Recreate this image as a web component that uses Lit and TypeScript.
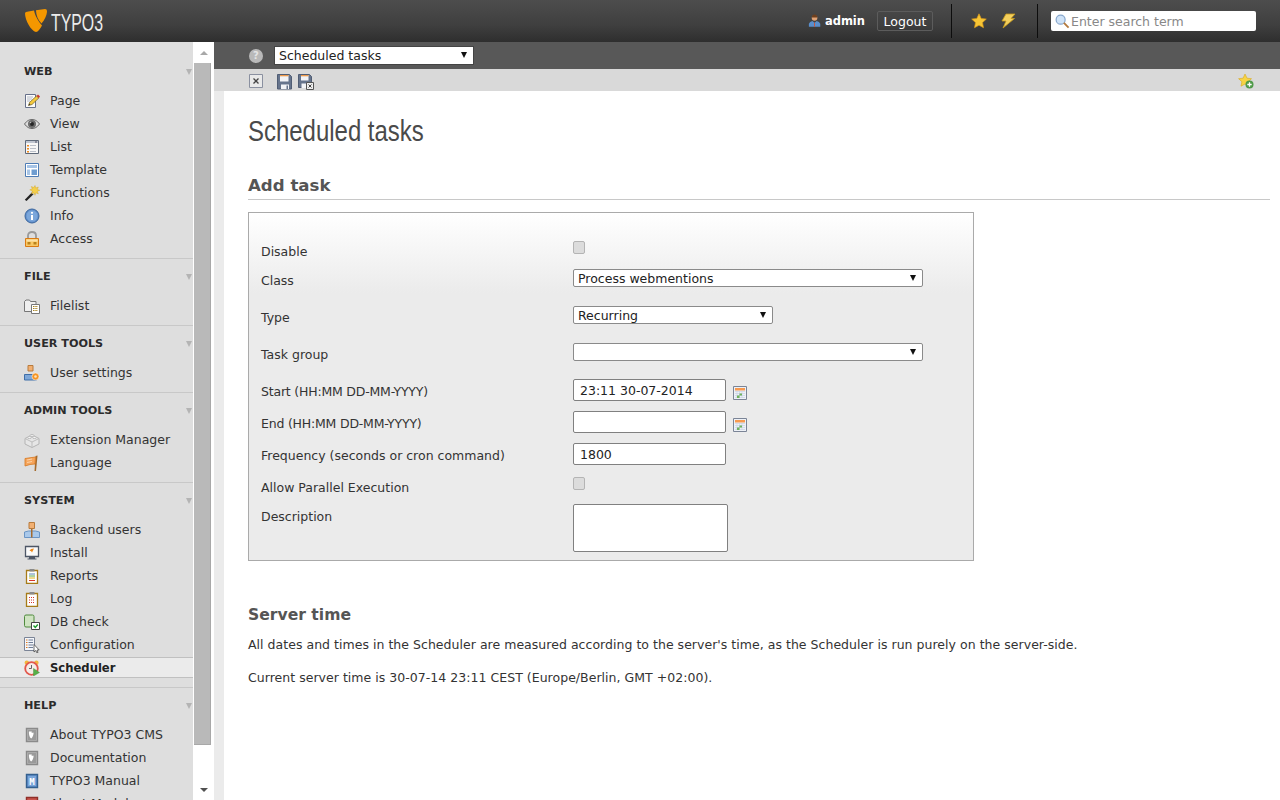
import { LitElement, html, css, svg } from 'lit';
import { customElement } from 'lit/decorators.js';

const icon = (body: unknown, size = 16) =>
  html`<svg width=${size} height=${size} viewBox="0 0 16 16">${body}</svg>`;

const T3 = svg`<path d="M5 4.500h2.800l-.3 1.200c1 .2 1.600.1 2-.2.4 1.700-1 5.200-2.300 6C5.800 10.800 4.600 7 5 4.500z" fill="#fff"/>`;

const ICONS: Record<string, unknown> = {
  page: svg`<path d="M1.500 1.500h10v13h-10z" fill="#fbfbfb" stroke="#66708a"/><path d="M3 4h6M3 6h5M3 8h3" stroke="#b4bac6"/><path d="M4.500 12.500l1.200-3.200L12.500 3l2.300 2-6.800 6.500z" fill="#f6cb3e" stroke="#6f5f22" stroke-width=".7"/><path d="M12.500 3l2.300 2 1.200-1.500L14 1.500z" fill="#c8392b"/><path d="M4.500 12.500l.7-2 1.300 1z" fill="#333"/>`,
  view: svg`<path d="M.5 8C3 4.500 5.500 3.500 8 3.500S13 4.500 15.500 8C13 11.500 10.500 12.500 8 12.500S3 11.500 .5 8z" fill="#dcdcdc" stroke="#666"/><circle cx="8" cy="8" r="4" fill="#6a6a6a"/><circle cx="8" cy="8" r="2" fill="#262626"/><circle cx="6.500" cy="6.500" r=".8" fill="#bbb"/>`,
  list: svg`<path d="M1.500 1.500h13v13h-13z" fill="#f7f7f7" stroke="#5f6a7a"/><path d="M2 2h12v2H2z" fill="#bfc5d0"/><path d="M11 2.500h2v1h-2z" fill="#556"/><path d="M3 6h2v1.500H3zM3 9h2v1.500H3zM3 12h2v1.500H3z" fill="#f08a1c"/><path d="M6.500 6.500h6M6.500 9.500h6M6.500 12.500h6" stroke="#7f889a" stroke-dasharray="1 1"/>`,
  template: svg`<path d="M1.500 1.500h13v13h-13z" fill="#fff" stroke="#4f7db5"/><path d="M3 3h10v3H3z" fill="#a6c4e6"/><path d="M3 7.500h3V13H3z" fill="#a9c6e6"/><path d="M7.500 7.500H13V13H7.500z" fill="#6f9dd0"/>`,
  wand: svg`<path d="M.8 14.800L8.800 6.500l1.700 1.700L2.500 16z" fill="#222"/><path d="M8.800 6.500l1.700 1.700-1.200 1.200-1.700-1.700z" fill="#ddd"/><path d="M11 .5l.8 2.500 2.500-1-1 2.500 2.500.8-2.500 1 1 2.500-2.500-1-.8 2.500-1-2.500-2.500 1 1-2.500L5.800 4.800l2.500-.8-1-2.500 2.500 1z" fill="#f4cf4a" stroke="#d09f1c" stroke-width=".4"/>`,
  info: svg`<circle cx="8" cy="8" r="7" fill="#5f8fcb" stroke="#3c669d"/><circle cx="8" cy="8" r="5.500" fill="#7ba6da"/><path d="M7 7h2v5H7z" fill="#fff"/><circle cx="8" cy="4.800" r="1.100" fill="#fff"/>`,
  lock: svg`<path d="M4 7.500V4.500C4 2.500 5.500 1 8 1s4 1.500 4 3.500V7.500" fill="none" stroke="#9a9a9a" stroke-width="1.800"/><path d="M1.500 7.500h13v8h-13z" fill="#f9c865" stroke="#d97a14"/><path d="M2.500 8.500h11v2h-11z" fill="#fde2a6"/><path d="M3.500 11h3v2.500h-3zM9.500 11h3v2.500h-3z" fill="#b9821c"/>`,
  folder: svg`<path d="M.5 13.500v-10l1.500-1.500h3.500l1 1.500h5.500v10z" fill="#efefef" stroke="#777"/><path d="M7.500 6.500h8v9h-8z" fill="#fff" stroke="#777"/><path d="M9 8.500h5M9 10.500h5M9 12.500h5" stroke="#a98524" stroke-dasharray="1.500 .8"/>`,
  usercfg: svg`<path d="M4 .5h5v5.500H4z" fill="#f2b072" stroke="#b87b3c"/><path d="M.5 15V9.500h12V15z" fill="#7ea7d8" stroke="#3f6ea8"/><circle cx="11.500" cy="11.500" r="3.500" fill="#f59322" stroke="#fff" stroke-width=".5"/><circle cx="11.500" cy="11.500" r="1.300" fill="#ffe2b8"/>`,
  brick: svg`<path d="M8 3l7 3.500V12l-7 3.500L1 12V6.500z" fill="#e6e6e6" stroke="#b4b4b4"/><path d="M1 6.500L8 10l7-3.500M8 10v5.500" stroke="#bdbdbd" fill="none"/><ellipse cx="5.500" cy="5.500" rx="2" ry="1" fill="#f4f4f4" stroke="#bbb"/><ellipse cx="10.500" cy="5.500" rx="2" ry="1" fill="#f4f4f4" stroke="#bbb"/><ellipse cx="8" cy="3.500" rx="2" ry="1" fill="#f4f4f4" stroke="#bbb"/>`,
  flag: svg`<path d="M11.500 1l2-.5 0 .5-1.500 15h-1.500z" fill="#a56a2c"/><path d="M1 3.500l10.500-1.500-.5 7-5 .5-5 1.500z" fill="#f6a55c" stroke="#d5771f" stroke-width=".8"/><path d="M3 5l5-1M3 7.500l5-1" stroke="#fbd3a8"/>`,
  user: svg`<path d="M5 .5h5.500v6H5z" fill="#f2b072" stroke="#b87b3c"/><path d="M.5 15.500V10l4-1h7l4 1v5.500z" fill="#a9c8ea" stroke="#6a94c4"/><path d="M7 7h1.500v8.500H7z" fill="#a56a2c"/>`,
  monitor: svg`<path d="M1.500 1.500h13v10h-13z" fill="#fafafa" stroke="#4d5666" stroke-width="1.300"/><path d="M5 12h6v1.500H5zM3.500 13.500h9v1h-9z" fill="#4d5666"/><path d="M7 4l3-.5-2 4-1-1.500H5.500z" fill="#f08a1c"/>`,
  report: svg`<path d="M2.500 2.500h11v13h-11z" fill="#fff" stroke="#a77b18" stroke-width="1.300"/><path d="M5.500 1h5v2.500h-5z" fill="#8a8a8a"/><path d="M5 6h6" stroke="#5c86b8"/><path d="M5 8h6" stroke="#5aa84a"/><path d="M5 10h6" stroke="#e2b21c"/><path d="M5 12.500h6" stroke="#d7362a"/>`,
  log: svg`<path d="M2.500 2.500h11v13h-11z" fill="#fff" stroke="#a77b18" stroke-width="1.300"/><path d="M5.500 1h5v2.500h-5z" fill="#8a8a8a"/><path d="M5 6.500h6M5 9h6M5 11.500h6" stroke="#d7362a" stroke-dasharray="1 1"/>`,
  dbcheck: svg`<path d="M.5 2.500Q.5 1 2 1h6.500Q10 1 10 2.500v10.500H2Q.5 13 .5 11.500z" fill="#cfe3c2" stroke="#4f8a3d"/><path d="M7.500 8.500h8v7h-8z" fill="#fff" stroke="#444"/><path d="M9.500 11.500l1.800 2 2.500-3" fill="none" stroke="#1d9a2a" stroke-width="1.400"/>`,
  config: svg`<path d="M.5 .5h10v13H.5z" fill="#f4f6fa" stroke="#7b8496"/><path d="M2 3h1.500M2 5.500h1.500M2 8h1.500M2 10.500h1.500" stroke="#e07a1c"/><path d="M4.500 3H9M4.500 5.500H9M4.500 8H9M4.500 10.500H9" stroke="#6f7d96"/><path d="M10 7.500v7.500l1.800-1.500 1.200 2.500 1-.5-1-2.500h2.200z" fill="#fff" stroke="#333" stroke-width=".7"/>`,
  clock: svg`<circle cx="2.800" cy="2.800" r="2.200" fill="#f3b53c"/><circle cx="12.400" cy="2.800" r="2.200" fill="#f3b53c"/><circle cx="7.500" cy="8.500" r="6.300" fill="#f5ece8" stroke="#e2574c" stroke-width="1.800"/><path d="M7.500 5v3.500H5" fill="none" stroke="#666"/><path d="M9.500 8.500l6 4-6 3.500z" fill="#56b048" stroke="#3c8c32" stroke-width=".4"/>`,
  t3doc: svg`<path d="M2.500 1.500h11v13h-11z" fill="#b5b5b5" stroke="#8a8a8a" stroke-width="1.400"/><path d="M4 3h8v10H4z" fill="#9a9a9a"/>${T3}`,
  manual: svg`<path d="M2.500 1.500h11v13h-11z" fill="#5f8fcb" stroke="#34608f" stroke-width="1.400"/><path d="M4 3h8v10H4z" fill="#7ba6da"/><text x="8" y="11.500" font-size="9" font-family="DejaVu Sans Mono" font-weight="bold" text-anchor="middle" fill="#fff">M</text>`,
  modules: svg`<path d="M2.500 1.500h11v13h-11z" fill="#c9544c" stroke="#8f2f28" stroke-width="1.400"/><path d="M4 4h8v2H4z" fill="#f4c6c2"/>`,
  close: svg`<path d="M.5 .5h13v13H.5z" fill="#e9e9e9" stroke="#8a90a0"/><path d="M4.500 4.500l5 5M9.500 4.500l-5 5" stroke="#444" stroke-width="1.300"/>`,
  save: svg`<path d="M.5 .5h12l2 2v12.500H.5z" fill="#66748c" stroke="#505d74"/><path d="M3 1h8.500v6.500H3z" fill="#f2f3f6"/><path d="M3 1h8.500v1.300H3z" fill="#ee9a4a"/><path d="M4 10.500h8V15H4z" fill="#f2f3f6"/><path d="M9.500 11.500H11V15H9.500z" fill="#66748c"/>`,
  saveclose: svg`<path d="M.5 .5h11l2 2v11H.5z" fill="#66748c" stroke="#505d74"/><path d="M3 1h7.500v5.500H3z" fill="#f2f3f6"/><path d="M3 1h7.500v1.300H3z" fill="#ee9a4a"/><path d="M3.500 9.500h4.500V14H3.500z" fill="#f2f3f6"/><path d="M8.500 8.500h7v7h-7z" fill="#eee" stroke="#555"/><path d="M10.500 10.500l3 3M13.500 10.500l-3 3" stroke="#444"/>`,
  star: svg`<path d="M8 .8l2.200 4.700 5.100.6-3.800 3.500 1 5.100L8 12.200 3.500 14.700l1-5.100L.7 6.100l5.100-.6z" fill="#f7c535" stroke="#d99a1a" stroke-width=".7"/>`,
  bolt: svg`<path d="M6 1h9l-4 4.500h3.500L3 15l3-7H2z" fill="#f3cf5d" stroke="#c79a1c" stroke-width=".8"/>`,
  starplus: svg`<path d="M7 1l2 4.200 4.500.5-3.300 3 .9 4.500L7 11 3 13.200l.9-4.500L.6 5.700l4.500-.5z" fill="#f7d444" stroke="#d9a71a" stroke-width=".6"/><circle cx="11.500" cy="11.500" r="4" fill="#4f9a48"/><path d="M9.300 11.500h4.400M11.500 9.300v4.400" stroke="#fff" stroke-width="1.300"/>`,
  admin: svg`<circle cx="7.500" cy="4.500" r="3.200" fill="#e0a276"/><path d="M4.300 4c0-2 1.400-3.300 3.200-3.300S10.700 2 10.700 4z" fill="#6d3f1d"/><path d="M1 14.500V11q1-2.500 4-3l2.500 2 2.500-2q3 .5 4 3v3.500z" fill="#5a8fcd"/><path d="M7 10h1v4.500H7z" fill="#d8512c"/>`,
  search: svg`<circle cx="6" cy="6" r="4.800" fill="#cfe3f8" stroke="#86a6cc" stroke-width="1.300"/><path d="M9.500 9.500l5 5" stroke="#b4793c" stroke-width="2"/>`,
  calendar: svg`<path d="M.5 .5h13v13H.5z" fill="#eef1f6" stroke="#7b8496"/><path d="M2 2h10v2.500H2z" fill="#f79a50"/><path d="M2 5.500h10M2 7.500h10M2 9.500h10M2 11.500h10M4 5v7M6.500 5v7M9 5v7" stroke="#c8d3e6" stroke-width=".7"/><path d="M6.500 7.500H9V9.500H6.500zM4 9.500h2.500v2.500H4z" fill="#6fb25c"/>`,
};

const NAV = [
  { title: 'WEB', items: [['Page', 'page'], ['View', 'view'], ['List', 'list'], ['Template', 'template'], ['Functions', 'wand'], ['Info', 'info'], ['Access', 'lock']] },
  { title: 'FILE', items: [['Filelist', 'folder']] },
  { title: 'USER TOOLS', items: [['User settings', 'usercfg']] },
  { title: 'ADMIN TOOLS', items: [['Extension Manager', 'brick'], ['Language', 'flag']] },
  { title: 'SYSTEM', items: [['Backend users', 'user'], ['Install', 'monitor'], ['Reports', 'report'], ['Log', 'log'], ['DB check', 'dbcheck'], ['Configuration', 'config'], ['Scheduler', 'clock']] },
  { title: 'HELP', items: [['About TYPO3 CMS', 't3doc'], ['Documentation', 't3doc'], ['TYPO3 Manual', 'manual'], ['About Modules', 'modules']] },
];

@customElement('app-root')
export class AppRoot extends LitElement {
  static styles = css`
    :host {
      display: flex;
      flex-direction: column;
      width: 1280px;
      height: 800px;
      overflow: hidden;
      background: #fff;
      font-family: 'DejaVu Sans', Verdana, sans-serif;
      font-size: 12.5px;
      color: #333;
    }
    svg { display: block; flex: none; }

    .topbar {
      height: 42px;
      flex: none;
      display: flex;
      align-items: center;
      background: linear-gradient(#4d4d4d, #3f3f3f 60%, #2e2e2e);
      color: #fff;
    }
    .logo { display: flex; align-items: center; margin-left: 25px; gap: 4px; margin-top: -2px; }
    .logo-text {
      display: inline-block;
      font-family: 'Liberation Sans', sans-serif;
      font-size: 23px;
      color: #ececec;
      line-height: 24px;
      margin-top: 5px;
      transform: scaleX(.69);
      transform-origin: left center;
    }
    .top-right { margin-left: auto; display: flex; align-items: center; height: 100%; }
    .who { display: flex; align-items: center; gap: 3px; font-weight: bold; font-size: 11.5px; }
    .logout {
      margin-left: 12px;
      width: 56px;
      height: 20px;
      box-sizing: border-box;
      border: 1px solid #5c5c5c;
      border-radius: 2px;
      background: none;
      color: #fff;
      font: inherit;
      padding: 0;
    }
    .sep { width: 1px; height: 34px; background: #0d0d0d; margin-left: 18px; }
    .shortcuts { display: flex; gap: 13px; margin-left: 19px; }
    .shortcuts + .sep { margin-left: 21px; }
    .search {
      margin: 0 24px 0 13px;
      width: 205px;
      height: 20px;
      box-sizing: border-box;
      padding-left: 4px;
      display: flex;
      align-items: center;
      gap: 1px;
      background: #fff;
      border-radius: 2px;
      color: #888;
    }

    .body { flex: 1; display: flex; min-height: 0; }
    .sidebar { width: 193px; flex: none; background: #dedede; overflow: hidden; padding-top: 12px; box-sizing: border-box; }
    .section { padding-bottom: 8px; border-bottom: 1px solid #c8c8c8; }
    .section-head {
      height: 35px;
      padding: 0 1px 0 24px;
      display: flex;
      justify-content: space-between;
      font-weight: bold;
      font-size: 11.2px;
      line-height: 35px;
      color: #2b2b2b;
    }
    .caret {
      margin-top: 15px;
      width: 0;
      height: 0;
      border: 3.500px solid transparent;
      border-top: 6px solid #b4b4b4;
      border-bottom: 0;
    }
    .item { height: 23px; display: flex; align-items: center; gap: 10px; padding-left: 24px; }
    .item.active {
      height: 19px;
      margin: 1px 0;
      background: #ebebeb;
      border-top: 1px solid #c0c0c0;
      border-bottom: 1px solid #c0c0c0;
      font-weight: bold;
      font-size: 11.6px;
      color: #222;
    }

    .scroll { width: 21px; flex: none; background: #fff; display: flex; flex-direction: column; align-items: center; }
    .scroll-btn { height: 21px; flex: none; display: flex; align-items: center; justify-content: center; width: 100%; }
    .up { width: 0; height: 0; border: 4px solid transparent; border-bottom: 4px solid #a8a8a8; border-top: 0; }
    .down { width: 0; height: 0; border: 4px solid transparent; border-top: 4px solid #505050; border-bottom: 0; }
    .thumb { width: 17px; height: 682px; background: #b9b9b9; border-right: 1px solid #a8a8a8; border-bottom: 1px solid #a8a8a8; box-sizing: border-box; margin-right: 2px; }
    .track-rest { flex: 1; }

    .main { flex: 1; min-width: 0; display: flex; flex-direction: column; }
    .doc-dark { height: 27px; flex: none; background: #585858; display: flex; align-items: center; padding-left: 35px; gap: 11px; }
    .help {
      width: 14px;
      height: 14px;
      border-radius: 50%;
      background: #b9b9b9;
      color: #e4e4e4;
      font-size: 10px;
      font-weight: bold;
      text-align: center;
      line-height: 14px;
    }
    .doc-light { height: 22px; flex: none; box-sizing: border-box; padding: 4px 26px 0 35px; background: #d9d9d9; display: flex; align-items: center; }
    .doc-light .close { margin-right: 12px; }
    .doc-light .save { margin-right: 5px; }
    .doc-light .fav { margin-left: auto; margin-top: -2px; }

    .content-wrap { flex: 1; display: flex; min-height: 0; background: #ebebeb; padding-left: 10px; }
    .content { flex: 1; background: #fff; padding: 0 10px 0 24px; min-width: 0; }
    h1 {
      margin: 23px 0 0;
      font-family: 'Liberation Sans', sans-serif;
      font-weight: normal;
      font-size: 29px;
      line-height: 34px;
      color: #4a4a4a;
      transform: scaleX(.826);
      transform-origin: left center;
    }
    h2 {
      margin: 26px 0 12px;
      padding-bottom: 1px;
      border-bottom: 1px solid #c8c8c8;
      font-size: 16.6px;
      line-height: 24px;
      font-weight: bold;
      color: #555;
    }
    h3 {
      margin: 42px 0 0;
      font-size: 15.6px;
      line-height: 24px;
      font-weight: bold;
      color: #555;
    }
    p { margin: 0; line-height: 17px; letter-spacing: .03px; }
    .p1 { margin-top: 9px; }
    .p2 { margin-top: 16px; }

    .form {
      width: 726px;
      box-sizing: border-box;
      height: 349px;
      border: 1px solid #aaa;
      padding: 28px 0 0 12px;
      background: linear-gradient(#fff, #ebebeb 80px);
    }
    .row { display: grid; grid-template-columns: 312px 1fr; align-items: start; }
    .row label { display: block; line-height: 16px; }
    .row label.dt { letter-spacing: -.2px; }
    .h28 { height: 28px; }
    .h27 { height: 27px; }
    .h37 { height: 37px; }
    .h36 { height: 36px; }
    .h34 { height: 34px; }
    .h32 { height: 32px; }
    .lt3 label { margin-top: 3px; }
    .lt4 label { margin-top: 4px; }
    .lt5 label { margin-top: 5px; }
    .cb {
      appearance: none;
      display: block;
      margin: 0;
      width: 12px;
      height: 13px;
      box-sizing: border-box;
      border: 1px solid #b4b4b4;
      border-radius: 2px;
      background: #dcdcdc;
    }
    .sel { position: relative; display: block; }
    .sel select {
      appearance: none;
      display: block;
      width: 100%;
      box-sizing: border-box;
      height: 18px;
      padding: 0 0 0 4px;
      border: 1px solid #8a8a8a;
      border-radius: 2px;
      background: #fff;
      font: inherit;
      color: #222;
    }
    .sel::after {
      content: '';
      position: absolute;
      right: 7px;
      top: 6px;
      border: 3.500px solid transparent;
      border-top: 6px solid #111;
      border-bottom: 0;
    }
    .w350 { width: 350px; }
    .w200 { width: 200px; }
    .sel.module { width: 200px; }
    .sel.module select { height: 19px; border-radius: 0; border-color: #444; }
    .date { display: flex; gap: 7px; }
    .txt {
      display: block;
      width: 153px;
      height: 22px;
      box-sizing: border-box;
      margin: 0;
      padding: 0 6px;
      border: 1px solid #808080;
      border-radius: 2px;
      background: #fff;
      font: inherit;
      color: #222;
    }
    .date svg { margin-top: 7px; }
    textarea.txt { width: 155px; height: 48px; resize: none; }
  `;

  private renderNav() {
    return NAV.map((s) => html`
      <div class="section">
        <div class="section-head"><span>${s.title}</span><span class="caret"></span></div>
        ${s.items.map(([label, ic]) => html`
          <div class="item ${label === 'Scheduler' ? 'active' : ''}">${icon(ICONS[ic])}<span>${label}</span></div>
        `)}
      </div>
    `);
  }

  render() {
    return html`
      <header class="topbar">
        <div class="logo">
          <svg width="22" height="23" viewBox="0 0 22 23">
            <path d="M0 4.500Q0 3 2 2.700L9 1.500C10 7 14 13 17 16.500C15 20 13 23 11 23C6 22 0 11 0 4.500z" fill="#f49700"/>
            <path d="M11 1.200L20 0Q22 0 22 2C22 6 19.500 11 16.500 14.500C13 11 11 6 11 1.200z" fill="#f49700"/>
          </svg>
          <span class="logo-text">TYPO3</span>
        </div>
        <div class="top-right">
          <div class="who">${icon(ICONS.admin, 14)}<span>admin</span></div>
          <button class="logout">Logout</button>
          <div class="sep"></div>
          <div class="shortcuts">${icon(ICONS.star)}${icon(ICONS.bolt)}</div>
          <div class="sep"></div>
          <div class="search">${icon(ICONS.search, 15)}<span>Enter search term</span></div>
        </div>
      </header>
      <div class="body">
        <nav class="sidebar">${this.renderNav()}</nav>
        <div class="scroll">
          <div class="scroll-btn"><span class="up"></span></div>
          <div class="thumb"></div>
          <div class="track-rest"></div>
          <div class="scroll-btn"><span class="down"></span></div>
        </div>
        <div class="main">
          <div class="doc-dark">
            <div class="help">?</div>
            <span class="sel module"><select><option>Scheduled tasks</option></select></span>
          </div>
          <div class="doc-light">
            <span class="close">${icon(ICONS.close)}</span>
            <span class="save">${icon(ICONS.save)}</span>
            <span>${icon(ICONS.saveclose)}</span>
            <span class="fav">${icon(ICONS.starplus)}</span>
          </div>
          <div class="content-wrap">
            <div class="content">
              <h1>Scheduled tasks</h1>
              <h2>Add task</h2>
              <div class="form">
                <div class="row h28 lt3"><label>Disable</label><input class="cb" type="checkbox" /></div>
                <div class="row h37 lt4"><label>Class</label><span class="sel w350"><select><option>Process webmentions</option></select></span></div>
                <div class="row h37 lt4"><label>Type</label><span class="sel w200"><select><option>Recurring</option></select></span></div>
                <div class="row h36 lt4"><label>Task group</label><span class="sel w350"><select><option></option></select></span></div>
                <div class="row h32 lt5"><label class="dt">Start (HH:MM DD-MM-YYYY)</label><div class="date"><input class="txt" value="23:11 30-07-2014" />${icon(ICONS.calendar)}</div></div>
                <div class="row h32 lt5"><label class="dt">End (HH:MM DD-MM-YYYY)</label><div class="date"><input class="txt" />${icon(ICONS.calendar)}</div></div>
                <div class="row h34 lt5"><label>Frequency (seconds or cron command)</label><input class="txt" value="1800" /></div>
                <div class="row h27 lt3"><label>Allow Parallel Execution</label><input class="cb" type="checkbox" /></div>
                <div class="row lt5"><label>Description</label><textarea class="txt"></textarea></div>
              </div>
              <h3>Server time</h3>
              <p class="p1">All dates and times in the Scheduler are measured according to the server's time, as the Scheduler is run purely on the server-side.</p>
              <p class="p2">Current server time is 30-07-14 23:11 CEST (Europe/Berlin, GMT +02:00).</p>
            </div>
          </div>
        </div>
      </div>
    `;
  }
}
